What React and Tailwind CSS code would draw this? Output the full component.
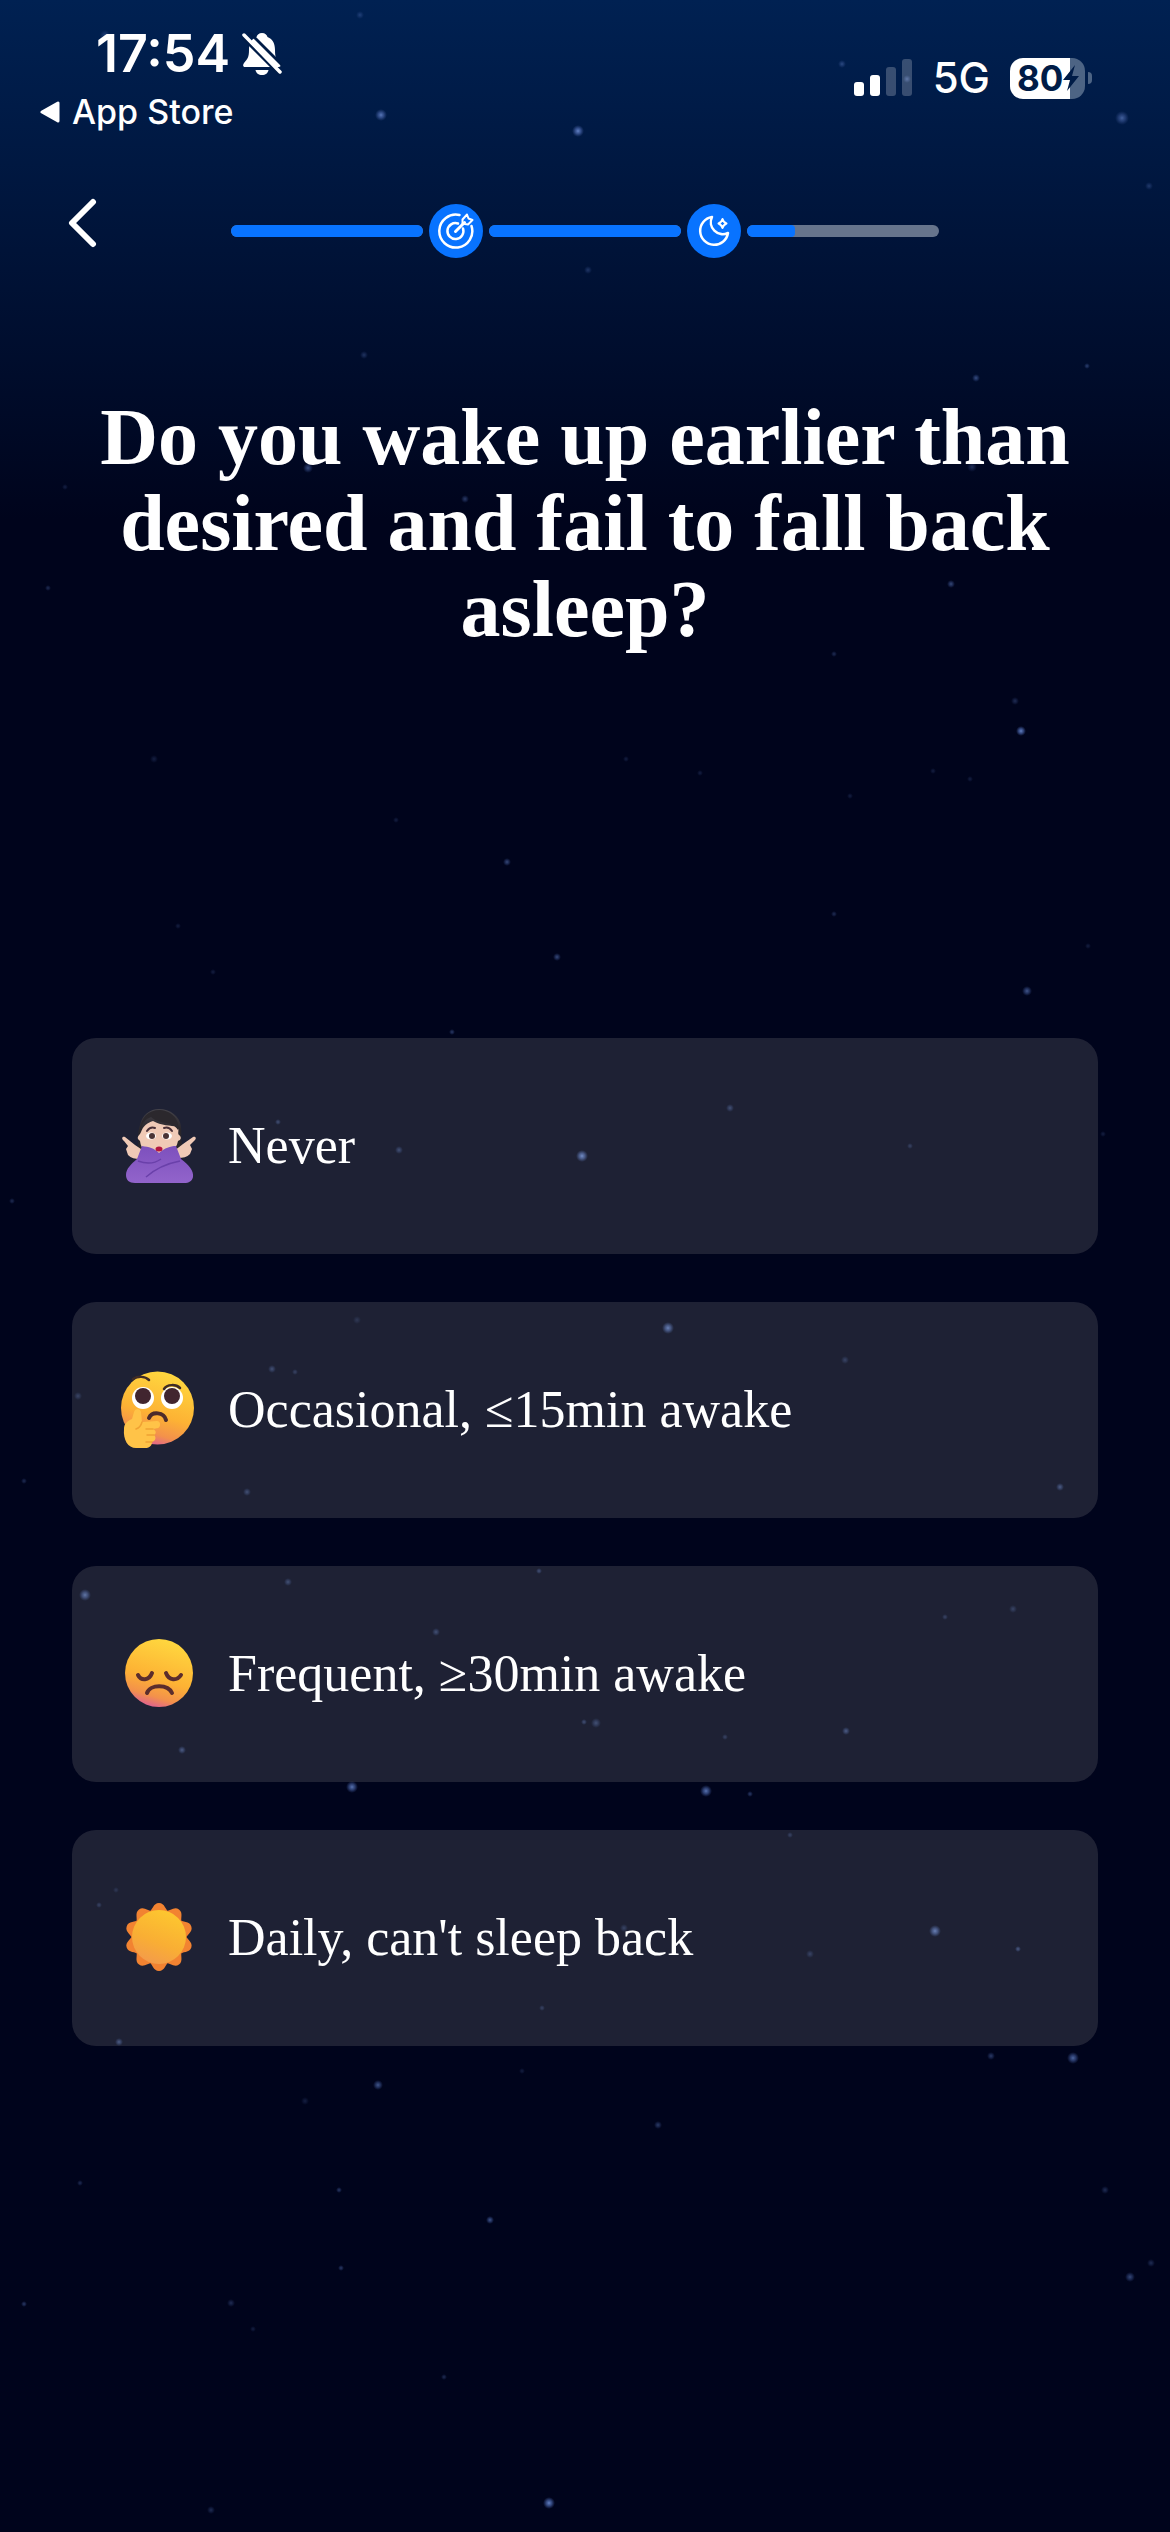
import React from 'react';

// x, y, radius, opacity
const stars = [
  [381, 115, 5, 0.8], [578, 131, 5, 0.9], [842, 64, 3, 0.4], [907, 79, 3, 0.5], [1122, 118, 6, 0.6],
  [360, 15, 3, 0.3], [105, 35, 4, 0.3], [1149, 186, 3, 0.3], [588, 270, 3, 0.3], [364, 355, 3, 0.3],
  [1087, 366, 2, 0.4], [976, 378, 3, 0.5], [308, 468, 4, 0.5], [65, 487, 2, 0.2], [972, 467, 4, 0.3],
  [465, 499, 3, 0.4], [951, 584, 3, 0.5], [48, 588, 2, 0.3], [834, 654, 2, 0.3], [1021, 731, 4, 0.9],
  [1015, 701, 3, 0.3], [154, 759, 3, 0.2], [626, 759, 2, 0.2], [700, 773, 2, 0.2], [933, 771, 2, 0.2],
  [970, 779, 2, 0.2], [850, 796, 2, 0.2], [396, 820, 2, 0.2], [507, 862, 3, 0.5], [557, 957, 3, 0.5],
  [834, 914, 2, 0.3], [1027, 991, 4, 0.6], [1088, 946, 2, 0.2], [178, 926, 2, 0.2], [213, 972, 2, 0.2],
  [452, 1032, 2, 0.4], [730, 1108, 3, 0.4], [582, 1156, 5, 0.9], [399, 1150, 3, 0.4], [278, 1122, 2, 0.4],
  [910, 1146, 2, 0.3], [668, 1328, 5, 0.8], [845, 1360, 3, 0.3], [78, 1396, 3, 0.3], [272, 1369, 3, 0.4],
  [357, 1320, 3, 0.2], [295, 1372, 2, 0.3], [1060, 1487, 3, 0.5], [247, 1492, 3, 0.4], [24, 1481, 2, 0.3],
  [12, 1201, 2, 0.3], [1103, 1134, 2, 0.2], [85, 1595, 5, 0.7], [288, 1582, 3, 0.4], [539, 1571, 2, 0.4],
  [436, 1632, 3, 0.4], [945, 1617, 2, 0.3], [1013, 1609, 3, 0.3], [182, 1750, 3, 0.5], [596, 1723, 4, 0.4],
  [584, 1722, 2, 0.4], [846, 1731, 3, 0.5], [725, 1737, 2, 0.3], [352, 1787, 5, 0.8], [706, 1791, 5, 0.8],
  [750, 1794, 2, 0.4], [99, 1905, 2, 0.3], [116, 1890, 2, 0.2], [935, 1931, 5, 0.8], [810, 1954, 3, 0.3],
  [1018, 1949, 2, 0.5], [542, 2008, 2, 0.3], [624, 1928, 3, 0.3], [790, 1835, 2, 0.3], [119, 2042, 3, 0.5],
  [991, 2056, 3, 0.4], [1073, 2058, 5, 0.7], [378, 2085, 4, 0.6], [522, 2071, 2, 0.2], [658, 2125, 3, 0.4],
  [305, 2101, 3, 0.2], [80, 2183, 2, 0.3], [339, 2190, 2, 0.4], [490, 2220, 3, 0.6], [1105, 2190, 3, 0.3],
  [341, 2268, 2, 0.4], [1130, 2277, 4, 0.5], [1151, 2263, 3, 0.3], [231, 2303, 3, 0.3], [24, 2304, 2, 0.4],
  [253, 2329, 2, 0.2], [444, 2377, 2, 0.3], [549, 2503, 5, 0.9], [211, 2510, 3, 0.3],
];

const StarField = () => (
  <svg
    className="absolute inset-0 h-full w-full"
    viewBox="0 0 1170 2532"
    preserveAspectRatio="xMidYMin slice"
    aria-hidden="true"
  >
    <defs>
      <radialGradient id="star">
        <stop offset="0" stopColor="#6f8fd6" />
        <stop offset="0.5" stopColor="#4a66ac" stopOpacity="0.7" />
        <stop offset="1" stopColor="#3a5290" stopOpacity="0" />
      </radialGradient>
    </defs>
    {stars.map(([x, y, r, o]) => (
      <circle key={`${x}-${y}`} cx={x} cy={y} r={r + 1} fill="url(#star)" opacity={o} />
    ))}
  </svg>
);

const BellOff = () => (
  <svg className="h-11 w-10" viewBox="0 0 40 44" aria-hidden="true">
    <path
      d="M20 1c3 0 5 2 5.5 4C31 7 33 12 33 18c0 7 1 9 4.5 13 1.500 2 1.500 4-.5 4H3c-2 0-2.500-2-1-4C5.500 27 7 25 7 18 7 12 9 7 14.500 5 15 3 17 1 20 1Z"
      fill="white"
    />
    <path d="M13.5 38h13c-.5 3-3 5-6.500 5s-6-2-6.500-5Z" fill="white" />
    <path d="m-1 4 40 40M5-2l38 38" stroke="#001c47" strokeWidth="3" />
    <path d="m2 3 36 37" stroke="white" strokeWidth="3.5" strokeLinecap="round" />
  </svg>
);

const StatusBar = () => (
  <header className="flex justify-between px-10 pt-7 text-white">
    <div>
      <div className="flex items-center gap-3 pl-14">
        <span className="text-[52px] leading-[52px] font-semibold">17:54</span>
        <BellOff />
      </div>
      <a href="#" className="mt-2 flex items-center gap-3 text-[34px] leading-[48px] font-medium">
        <svg className="h-6 w-5" viewBox="0 0 20 24" aria-hidden="true">
          <path d="M18 3v18L2 12Z" fill="white" stroke="white" strokeWidth="3" strokeLinejoin="round" />
        </svg>
        App Store
      </a>
    </div>
    <div className="flex h-[100px] items-center gap-5 pr-[38px]">
      <svg className="h-10 w-[60px]" viewBox="0 0 60 40" fill="white" aria-hidden="true">
        <rect x="1" y="24" width="10" height="14" rx="3" />
        <rect x="17" y="17" width="10" height="21" rx="3" />
        <rect x="33" y="9" width="10" height="29" rx="3" opacity="0.22" />
        <rect x="49" y="1" width="10" height="37" rx="3" opacity="0.22" />
      </svg>
      <span className="text-[42px] leading-[48px] font-medium">5G</span>
      <div className="flex items-center gap-[3px]">
        <div className="flex h-[41px] w-[75px] items-center overflow-hidden rounded-[13px] bg-linear-to-r from-white from-80% to-[#4d6484] to-80% pl-[7px] text-[#001c47]">
          <span className="text-[35px] leading-[41px] font-bold">80</span>
          <svg className="h-7 w-4" viewBox="0 0 16 28" aria-hidden="true">
            <path d="M12 1 0 16h7L4 27l12-15H9Z" fill="#001c47" />
          </svg>
        </div>
        <div className="h-3 w-1 rounded-r-full bg-[#4d6484]" />
      </div>
    </div>
  </header>
);

const Segment = ({ percent }) => (
  <div className="h-3 flex-1 overflow-hidden rounded-full bg-[#66748c]">
    <div className="h-full rounded-r-sm bg-[#0873ff]" style={{ width: `${percent}%` }} />
  </div>
);

const Step = ({ children }) => (
  <div className="flex size-[54px] items-center justify-center rounded-full bg-[#0873ff] text-white">
    {children}
  </div>
);

const TargetIcon = () => (
  <svg
    className="size-9"
    viewBox="0 0 36 36"
    fill="none"
    stroke="white"
    strokeWidth="2.5"
    strokeLinecap="round"
    strokeLinejoin="round"
    aria-hidden="true"
  >
    <path d="M21.500 2A16.500 16.500 0 1 0 33.500 13" />
    <path d="M20 10.500a8 8 0 1 0 5 5" />
    <path d="m17.500 18.500 9-9" strokeWidth="3" />
    <path d="M24.500 10.500V6.500L29 1.500l1.500 4 4 1.500-4.500 4.500-3-.5Z" strokeWidth="2" />
  </svg>
);

const MoonIcon = () => (
  <svg
    className="size-8"
    viewBox="0 0 32 32"
    fill="none"
    stroke="white"
    strokeWidth="2.5"
    strokeLinecap="round"
    strokeLinejoin="round"
    aria-hidden="true"
  >
    <path d="M14 2A14 14 0 1 0 30 18 12 12 0 0 1 14 2Z" />
    <path d="M24.500 4q1 3.500 4 4.500-3 1-4 4.500-1-3.500-4-4.500 3-1 4-4.500Z" strokeWidth="2" />
  </svg>
);

const NeverEmoji = () => (
  <svg className="size-[78px]" viewBox="0 0 78 78" aria-hidden="true">
    <defs>
      <linearGradient id="sweater" x1="0" y1="0" x2="0" y2="1">
        <stop offset="0" stopColor="#7d50bd" />
        <stop offset="1" stopColor="#9264cb" />
      </linearGradient>
      <linearGradient id="hair" x1="0" y1="0" x2="0" y2="1">
        <stop offset="0" stopColor="#45434a" />
        <stop offset="0.5" stopColor="#29262b" />
      </linearGradient>
    </defs>
    <path d="M17 43C20 36 16 30 20 18 22 8 30 2 39 2c11 0 21 7 22 18 1 9-1 14 3 23Z" fill="url(#hair)" />
    <path d="M18 32c-1-3 2-4 3-7 2-6 6-9 12-11 8 5 18 4 24 6 3 3 0 6 2 8 3 2 2 5-1 6-2 10-9 15-19 15-11 0-18-6-19-15Z" fill="#f0cab6" />
    <path d="M20 25c1-8 5-13 11-15 9 8 21 3 27 13 2-9-5-19-18-20-12 0-20 8-20 22Z" fill="#2b282d" />
    <path d="M27 24c2-3 5-4 8-3M44 21c3-1 6 0 8 3" fill="none" stroke="#493037" strokeWidth="2" strokeLinecap="round" />
    <ellipse cx="31" cy="29" rx="5" ry="3.5" fill="#fff" />
    <ellipse cx="47" cy="29" rx="5" ry="3.5" fill="#fff" />
    <circle cx="32" cy="29" r="3" fill="#4a3435" />
    <circle cx="46" cy="29" r="3" fill="#4a3435" />
    <path d="M24 44 15 38 5 30c-3-1-4 2-1 4l4 5-2 3 2 6c3 3 7 4 12 4ZM54 44l9-7 10-7c3-1 4 2 1 4l-4 4 2 4-2 5c-3 3-7 4-12 4Z" fill="#f0cab6" />
    <path d="M22 39c7 1 12 2 17 7 6-5 11-7 17-7l5 13c8 6 13 12 12 18-1 4-4 6-9 6H15c-6 0-9-3-9-8 0-6 5-11 11-16Z" fill="url(#sweater)" />
    <path d="M18 54c8 3 16 3 23-2M26 70c8-7 18-13 34-16" fill="none" stroke="#6a40aa" strokeWidth="1.5" />
    <ellipse cx="39" cy="42" rx="3.500" ry="2.500" fill="#b4173f" />
  </svg>
);

const ThinkingEmoji = () => (
  <svg className="size-[78px]" viewBox="0 0 78 78" aria-hidden="true">
    <circle cx="37.5" cy="37" r="36.5" fill="url(#face)" />
    <circle cx="23" cy="27" r="11" fill="#fff" />
    <circle cx="52" cy="27" r="11" fill="#fff" />
    <circle cx="23" cy="25" r="8" fill="#41252f" />
    <circle cx="52" cy="25" r="8" fill="#41252f" />
    <path d="M13 8c5-3 12-3 16 1M44 18c3-5 12-5 16-1" fill="none" stroke="#402c25" strokeWidth="2.5" strokeLinecap="round" />
    <path d="M29 47c3-7 15-6 17 2" fill="none" stroke="#4c2b2b" strokeWidth="4" strokeLinecap="round" />
    <path d="M4 58c0-5 3-8 8-10l2-7c1-4 6-4 7 0l1 10 15-1c4 0 4 6 1 7l-5 1c4 2 3 5 1 6 3 3 1 6-2 7 0 4-3 6-7 6H16C8 77 3 69 4 58Z" fill="#ffc348" />
    <path d="M22 51c-1 4-3 6-6 7M33 58h-7M34 64h-7M32 71h-6" fill="none" stroke="#f0a233" strokeWidth="1.5" strokeLinecap="round" />
  </svg>
);

const SadEmoji = () => (
  <svg className="size-[78px]" viewBox="0 0 78 78" aria-hidden="true">
    <defs>
      <linearGradient id="face" x1="0.7" y1="0" x2="0.4" y2="1">
        <stop offset="0" stopColor="#ffd93f" />
        <stop offset="0.6" stopColor="#fdb234" />
        <stop offset="0.85" stopColor="#f3914b" />
        <stop offset="1" stopColor="#e0628f" />
      </linearGradient>
    </defs>
    <circle cx="39" cy="38" r="34" fill="url(#face)" />
    <path d="M18 40c3 6 11 6 14-2M46 38c3 8 11 8 15 2" fill="none" stroke="#5b2d2d" strokeWidth="4" strokeLinecap="round" />
    <path d="M27 58c3-9 21-9 25 0" fill="none" stroke="#5b2d2d" strokeWidth="4" strokeLinecap="round" />
  </svg>
);

const petals = [0, 36, 72, 108, 144, 180, 216, 252, 288, 324];

const SunEmoji = () => (
  <svg className="size-[78px]" viewBox="0 0 78 78" aria-hidden="true">
    <defs>
      <linearGradient id="sun" x1="0.7" y1="0" x2="0.3" y2="1">
        <stop offset="0" stopColor="#fdc82f" />
        <stop offset="0.6" stopColor="#f9ae34" />
        <stop offset="1" stopColor="#f39a4c" />
      </linearGradient>
    </defs>
    {petals.map((angle) => (
      <path
        key={angle}
        d="M28 14C33 11 33 4 39 4s6 7 11 10L39 38Z"
        fill="#f28331"
        transform={`rotate(${angle} 39 38)`}
      />
    ))}
    <circle cx="39" cy="38" r="27" fill="url(#sun)" />
  </svg>
);

const options = [
  { label: 'Never', Emoji: NeverEmoji },
  { label: 'Occasional, ≤15min awake', Emoji: ThinkingEmoji },
  { label: 'Frequent, ≥30min awake', Emoji: SadEmoji },
  { label: "Daily, can't sleep back", Emoji: SunEmoji },
];

const App = () => {
  return (
    <div className="relative min-h-screen bg-[#00041c] bg-linear-to-b/srgb from-[#002152] to-[#00041c] to-[520px] font-['Inter',sans-serif]">
      <StarField />
      <div className="relative">
        <StatusBar />

        <nav className="mt-17 flex items-center px-[60px]">
          <button type="button" aria-label="Back" className="-mt-4 w-[171px]">
            <svg className="h-[50px] w-11" viewBox="0 0 44 50" fill="none" aria-hidden="true">
              <path d="M33 4 12 25l21 21" stroke="white" strokeWidth="6" strokeLinecap="round" strokeLinejoin="round" />
            </svg>
          </button>
          <div className="flex flex-1 items-center gap-1.5">
            <Segment percent={100} />
            <Step><TargetIcon /></Step>
            <Segment percent={100} />
            <Step><MoonIcon /></Step>
            <Segment percent={25} />
          </div>
          <div className="w-[171px]" />
        </nav>

        <main className="px-[72px] pt-[136px] font-['Liberation_Serif',serif] text-white">
          <h1 className="text-center text-[80px] leading-[86px] font-bold">
            Do you wake up earlier than desired and fail to fall back asleep?
          </h1>
          <div className="mt-[386px] flex flex-col gap-12">
            {options.map(({ label, Emoji }) => (
              <button
                key={label}
                type="button"
                className="flex h-[216px] w-full items-center gap-[30px] rounded-3xl bg-[#f4fae8]/12 px-12 text-left text-[52px] leading-[60px]"
              >
                <Emoji />
                {label}
              </button>
            ))}
          </div>
        </main>
      </div>
    </div>
  );
};

export default App;
